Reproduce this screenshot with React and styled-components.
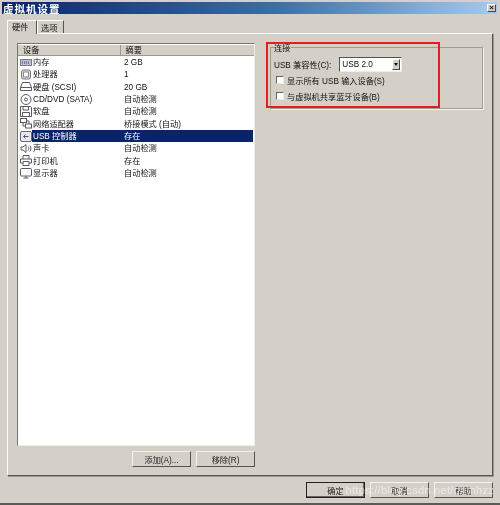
import React from "react";
import styled, { createGlobalStyle } from "styled-components";

const GlobalStyle = createGlobalStyle`
  html, body {
    margin: 0;
    padding: 0;
    background: #d4d0c8;
  }
  body {
    font-family: "Liberation Sans", "Noto Sans CJK SC", sans-serif;
    font-size: 8.2px;
    color: #111;
  }
`;

const Window = styled.div`
  position: relative;
  width: 500px;
  height: 505px;
  box-sizing: border-box;
  padding: 2px 3px 2px 2px;
  display: flex;
  flex-direction: column;
  background: #d4d0c8;
  border-bottom: 2px solid #5a5a56;
  overflow: hidden;
  filter: blur(0.3px);
`;

const TitleBar = styled.div`
  height: 12px;
  flex: none;
  display: flex;
  align-items: center;
  justify-content: space-between;
  padding: 0 1px;
  background: linear-gradient(90deg, #0a246a 0%, #3a6ea5 55%, #a6caf0 100%);
`;

const Title = styled.span`
  color: #fff;
  font-size: 10.5px;
  font-weight: 700;
  letter-spacing: 1px;
`;

const CloseButton = styled.span`
  width: 9px;
  height: 8px;
  display: flex;
  align-items: center;
  justify-content: center;
  background: #d4d0c8;
  border: 1px solid;
  border-color: #fff #444 #444 #fff;
  box-sizing: border-box;
  font-size: 8px;
  font-weight: 700;
  line-height: 1;
  color: #111;
`;

const TabStrip = styled.div`
  flex: none;
  display: flex;
  margin: 6px 0 0 5px;
  height: 13px;
  position: relative;
  z-index: 1;
`;

const Tab = styled.div`
  width: ${(p) => (p.$active ? "30px" : "27px")};
  flex: none;
  box-sizing: border-box;
  padding: ${(p) => (p.$active ? "2px 0 0 4px" : "3px 0 0 3px")};
  line-height: 10px;
  background: #d4d0c8;
  border-left: 1px solid #fff;
  border-top: 1px solid #fff;
  border-right: 1px solid #55554f;
  margin-bottom: ${(p) => (p.$active ? "-1px" : "0")};
`;

const TabPanel = styled.div`
  flex: 1;
  margin: 0 4px 0 5px;
  box-sizing: border-box;
  padding: 9px 9px 8px 9px;
  display: flex;
  gap: 15px;
  border-left: 1px solid #fff;
  border-top: 1px solid #fff;
  border-right: 1px solid #55554f;
  border-bottom: 1px solid #55554f;
  box-shadow: 1px 1px 0 #9a9890;
`;

const DevicePane = styled.div`
  width: 238px;
  flex: none;
  display: flex;
  flex-direction: column;
`;

const DeviceList = styled.div`
  flex: 1;
  background: #fff;
  border: 1px solid;
  border-color: #77756f #efece6 #efece6 #77756f;
`;

const ListHeader = styled.div`
  display: flex;
  height: 12px;
  box-sizing: border-box;
  background: #d4d0c8;
  border-top: 1px solid #fff;
  border-bottom: 1px solid #9a9890;
  line-height: 11px;
`;

const HeaderCell = styled.div`
  width: ${(p) => p.$width}px;
  padding-left: 5px;
  box-sizing: border-box;
  border-right: ${(p) => (p.$divider ? "1px solid #9a9890" : "none")};
`;

const Row = styled.div`
  display: flex;
  height: 12.35px;
  line-height: 13.4px;
  white-space: nowrap;
`;

const IconCell = styled.div`
  width: 14px;
  flex: none;
  display: flex;
  align-items: center;
  justify-content: center;
  padding-left: 2px;
  box-sizing: border-box;
  color: #5a5a5a;
`;

const RowBody = styled.div`
  flex: 1;
  display: flex;
  margin-right: 1px;
  background: ${(p) => (p.$selected ? "#0a246a" : "transparent")};
  color: ${(p) => (p.$selected ? "#fff" : "#111")};
`;

const NameCell = styled.div`
  width: 92px;
  padding-left: 1px;
  box-sizing: border-box;
  flex: none;
`;

const SummaryCell = styled.div`
  flex: 1;
`;

const ButtonRow = styled.div`
  flex: none;
  display: flex;
  justify-content: flex-end;
  gap: 5px;
  padding-top: 5px;
  height: 21px;
  box-sizing: border-box;
`;

const Button = styled.button`
  width: 59px;
  height: 16px;
  padding: 0;
  box-sizing: border-box;
  font: inherit;
  color: #222;
  background: #d4d0c8;
  border: 1px solid;
  border-color: ${(p) => (p.$primary ? "#222" : "#f4f2ee #55554f #55554f #f4f2ee")};
  box-shadow: ${(p) => (p.$primary ? "inset -1px -1px 0 #66645e" : "none")};
`;

const SettingsPane = styled.div`
  flex: 1;
`;

const GroupBox = styled.fieldset`
  margin: -1.5px 0 0;
  padding: 4px 0 0 3px;
  height: 67.5px;
  box-sizing: border-box;
  border: 1px solid #9d9b93;
  box-shadow: 1px 1px 0 #f4f2ee;
`;

const GroupLegend = styled.legend`
  margin-left: 0;
  padding: 3px 1px 0 0;
  line-height: 8px;
`;

const CompatRow = styled.div`
  display: flex;
  align-items: center;
  gap: 8px;
  height: 15px;
`;

const Select = styled.div`
  width: 63px;
  height: 15px;
  box-sizing: border-box;
  display: flex;
  align-items: center;
  justify-content: space-between;
  padding-left: 2px;
  background: #fff;
  border: 1px solid;
  border-color: #55554f #efece6 #efece6 #55554f;
`;

const SelectArrow = styled.span`
  width: 8px;
  height: 11px;
  margin-right: 1px;
  display: flex;
  align-items: center;
  justify-content: center;
  box-sizing: border-box;
  background: #d4d0c8;
  border: 1px solid;
  border-color: #fff #444 #444 #fff;
  &::after {
    content: "";
    border-left: 2px solid transparent;
    border-right: 2px solid transparent;
    border-top: 3px solid #111;
  }
`;

const CheckRow = styled.label`
  display: flex;
  align-items: center;
  gap: 3px;
  height: 15px;
  margin-top: 1px;
`;

const CheckBox = styled.span`
  width: 8px;
  height: 8px;
  margin-left: 2px;
  flex: none;
  box-sizing: border-box;
  background: #fff;
  border: 1px solid;
  border-color: #66645e #efece6 #efece6 #66645e;
`;

const Footer = styled.div`
  flex: none;
  height: 25px;
  display: flex;
  justify-content: flex-end;
  align-items: flex-start;
  gap: 5px;
  padding: 6px 4px 0 0;
  box-sizing: border-box;
`;

const Highlight = styled.div`
  position: absolute;
  left: 266px;
  top: 42px;
  width: 174px;
  height: 66px;
  box-sizing: border-box;
  border: 2px solid #e0201f;
  pointer-events: none;
`;

const Watermark = styled.div`
  position: absolute;
  right: 6px;
  top: 484px;
  font-size: 11px;
  letter-spacing: 0.3px;
  color: rgba(255, 255, 255, 0.55);
  pointer-events: none;
`;

const Glyph = ({ children }) => (
  <svg width="12" height="11" viewBox="0 0 12 11" fill="none" stroke="currentColor" strokeWidth="1">
    {children}
  </svg>
);

const icons = {
  memory: (
    <Glyph>
      <rect x="0.5" y="2.5" width="11" height="6" fill="#b9c4dc" stroke="#778" />
      <path d="M2.5 4v3M4.5 4v3M6.5 4v3M8.5 4v3" stroke="#778" />
    </Glyph>
  ),
  cpu: (
    <Glyph>
      <rect x="1.5" y="1" width="9" height="9" rx="2" fill="#dfe3ea" stroke="#777" />
      <rect x="3.5" y="3" width="5" height="5" fill="#fff" stroke="#888" />
    </Glyph>
  ),
  disk: (
    <Glyph>
      <path d="M2.5 1.5h7l2 5v3h-11v-3zM.5 6.500h11" />
    </Glyph>
  ),
  cd: (
    <Glyph>
      <circle cx="6" cy="5.5" r="5" />
      <circle cx="6" cy="5.5" r="1.5" />
    </Glyph>
  ),
  floppy: (
    <Glyph>
      <path d="M.5.5h10l1 1v9H.5zM3 .5v3.500h5.500V.5M2.500 10.500v-4h7v4" />
    </Glyph>
  ),
  network: (
    <Glyph>
      <rect x="0.5" y="0.5" width="6" height="4" />
      <rect x="5.5" y="6" width="6" height="4" />
      <path d="M3 4.500v3.500h2.500M9 6V3H6.500" />
    </Glyph>
  ),
  usb: (
    <Glyph>
      <rect x="0.5" y="0.5" width="11" height="10" rx="1.5" fill="#e6e8ee" stroke="#667" />
      <path d="M8.500 5.500h-5M5.500 3.500l-2 2 2 2" stroke="#556" />
    </Glyph>
  ),
  sound: (
    <Glyph>
      <path d="M1 4h2l3-2.500v8L3 7H1zM8 3.500c1 1 1 3 0 4M9.800 2.500c1.500 1.500 1.500 4.500 0 6" />
    </Glyph>
  ),
  printer: (
    <Glyph>
      <path d="M3 4V.5h6V4M3 8H.5V4h11v4H9M3 6.500h6v4H3z" />
    </Glyph>
  ),
  display: (
    <Glyph>
      <rect x="0.5" y="0.5" width="11" height="7.500" rx="1" />
      <path d="M3.500 10h5M6 8v2" />
    </Glyph>
  ),
};

const devices = [
  { icon: "memory", name: "内存", summary: "2 GB" },
  { icon: "cpu", name: "处理器", summary: "1" },
  { icon: "disk", name: "硬盘 (SCSI)", summary: "20 GB" },
  { icon: "cd", name: "CD/DVD (SATA)", summary: "自动检测" },
  { icon: "floppy", name: "软盘", summary: "自动检测" },
  { icon: "network", name: "网络适配器", summary: "桥接模式 (自动)" },
  { icon: "usb", name: "USB 控制器", summary: "存在", selected: true },
  { icon: "sound", name: "声卡", summary: "自动检测" },
  { icon: "printer", name: "打印机", summary: "存在" },
  { icon: "display", name: "显示器", summary: "自动检测" },
];

export default function App() {
  return (
    <>
      <GlobalStyle />
      <Window>
        <TitleBar>
          <Title>虚拟机设置</Title>
          <CloseButton>×</CloseButton>
        </TitleBar>
        <TabStrip>
          <Tab $active>硬件</Tab>
          <Tab>选项</Tab>
        </TabStrip>
        <TabPanel>
          <DevicePane>
            <DeviceList>
              <ListHeader>
                <HeaderCell $width={103} $divider>设备</HeaderCell>
                <HeaderCell $width={134}>摘要</HeaderCell>
              </ListHeader>
              {devices.map((d) => (
                <Row key={d.name}>
                  <IconCell>{icons[d.icon]}</IconCell>
                  <RowBody $selected={d.selected}>
                    <NameCell>{d.name}</NameCell>
                    <SummaryCell>{d.summary}</SummaryCell>
                  </RowBody>
                </Row>
              ))}
            </DeviceList>
            <ButtonRow>
              <Button>添加(A)...</Button>
              <Button>移除(R)</Button>
            </ButtonRow>
          </DevicePane>
          <SettingsPane>
            <GroupBox>
              <GroupLegend>连接</GroupLegend>
              <CompatRow>
                USB 兼容性(C):
                <Select>
                  USB 2.0
                  <SelectArrow />
                </Select>
              </CompatRow>
              <CheckRow>
                <CheckBox />
                显示所有 USB 输入设备(S)
              </CheckRow>
              <CheckRow>
                <CheckBox />
                与虚拟机共享蓝牙设备(B)
              </CheckRow>
            </GroupBox>
          </SettingsPane>
        </TabPanel>
        <Footer>
          <Button $primary>确定</Button>
          <Button>取消</Button>
          <Button>帮助</Button>
        </Footer>
        <Highlight />
        <Watermark>https://blog.csdn.net/dhmhzz</Watermark>
      </Window>
    </>
  );
}
